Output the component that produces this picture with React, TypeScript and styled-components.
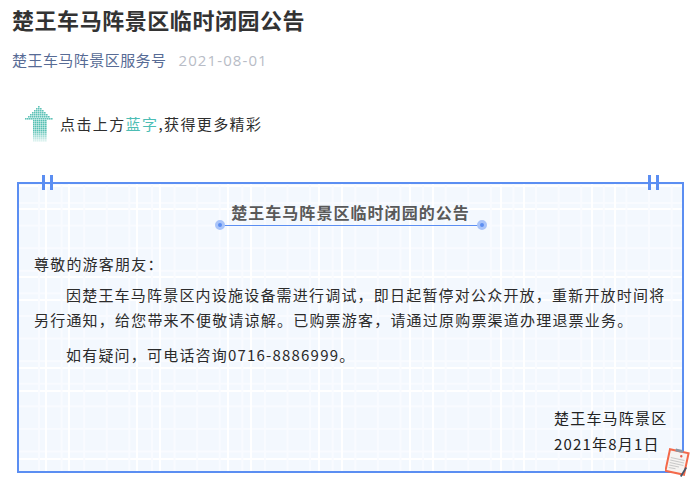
import React from "react";
import styled, { createGlobalStyle } from "styled-components";

const Global = createGlobalStyle`
  html, body { margin: 0; padding: 0; background: #fff; overflow: hidden; }
  body { font-family: "Open Sans", "Noto Sans CJK SC", sans-serif; }
`;

const Page = styled.main`
  width: 696px;
  height: 493px;
  box-sizing: border-box;
  padding: 2px 13px 0 12px;
  overflow: hidden;
`;

const Title = styled.h1`
  margin: 0;
  font: 700 22px/34px "Noto Sans CJK SC", sans-serif;
  color: #333;
  letter-spacing: 0.55px;
`;

const Meta = styled.div`
  display: flex;
  gap: 12px;
  margin-top: 14px;
  font-size: 15px;
  line-height: 20px;
  letter-spacing: 0.45px;
`;

const Account = styled.span`
  color: #576b95;
  font-family: "Noto Sans CJK SC", sans-serif;
`;

const DateText = styled.span`
  color: #b8bcc6;
  letter-spacing: 1.1px;
`;

const Promo = styled.div`
  display: flex;
  align-items: center;
  gap: 7px;
  margin: 35px 0 0 13px;
  height: 38px;
  font: 400 15px/24px "Noto Sans CJK SC", sans-serif;
  letter-spacing: 1.4px;
  color: #2e2e2e;
`;

const Highlight = styled.span`
  color: #4dbdb4;
`;

const Card = styled.section`
  position: relative;
  box-sizing: border-box;
  width: 667px;
  height: 291px;
  margin: 39px 0 0 5px;
  padding: 16px 15px 0 15px;
  border: 2px solid #5b8ef2;
  background-color: #f3f8fe;
  background-image:
    linear-gradient(90deg, #fff 0 2px, transparent 2px 68px, #fff 68px 70px, transparent 70px),
    linear-gradient(90deg, #f9fbff 0 1.5px, transparent 1.5px),
    linear-gradient(180deg, #fff 0 2px, transparent 2px 68px, #fff 68px 70px, transparent 70px),
    linear-gradient(180deg, #f9fbff 0 1.5px, transparent 1.5px);
  background-size: 91px 100%, 22.6px 100%, 100% 91px, 100% 22.6px;
  background-position: 49px 0, 19px 0, 0 24px, 0 18px;
`;

const Clip = styled.span<{ $side: "left" | "right" }>`
  position: absolute;
  top: -9px;
  ${(p) => (p.$side === "left" ? "left: 23px;" : "right: 23px;")}
  width: 11px;
  height: 15px;
  background: linear-gradient(90deg, #5b8ef2 0 3px, transparent 3px 8px, #5b8ef2 8px 11px);
`;

const HeadingWrap = styled.div`
  display: flex;
  justify-content: center;
`;

const Heading = styled.h2`
  position: relative;
  box-sizing: border-box;
  width: 262px;
  margin: 0;
  padding-bottom: 1px;
  border-bottom: 1px solid #5b8ef2;
  text-align: center;
  font: 700 16px/24px "Noto Sans CJK SC", sans-serif;
  letter-spacing: 1.05px;
  color: #595959;
`;

const Dot = styled.span<{ $side: "left" | "right" }>`
  position: absolute;
  bottom: -5px;
  ${(p) => p.$side}: -5px;
  width: 4px;
  height: 4px;
  border: 3px solid #a9c4f9;
  border-radius: 50%;
  background: #5b8ef2;
`;

const Body = styled.div`
  margin-top: 25px;
  font: 400 15px/25px "Noto Sans CJK SC", sans-serif;
  letter-spacing: 1.2px;
  color: #2b2b2b;
`;

const Para = styled.p<{ $indent?: boolean; $gap?: number }>`
  margin: ${(p) => p.$gap ?? 0}px 0 0;
  text-indent: ${(p) => (p.$indent ? "32px" : "0")};
`;

const Signature = styled.div`
  margin: 38px 0 0 auto;
  width: 113px;
  line-height: 26px;
  white-space: nowrap;
  color: #222;
`;

const Note = styled.svg`
  position: absolute;
  right: -11px;
  bottom: -9px;
  width: 28px;
  height: 32px;
`;

const ArrowIcon = () => {
  const cells: React.ReactElement[] = [];
  const widths = [2, 6, 10, 14, 18, 22, 28];
  widths.forEach((w, i) => {
    for (let x = 0; x < w; x += 2) {
      cells.push(<rect key={`h${i}-${x}`} x={14 - w / 2 + x} y={i * 2} width={1.6} height={1.6} fill="#45b9ab" opacity={0.85} />);
    }
  });
  for (let y = 14; y < 36; y += 2) {
    for (let x = 8; x < 21; x += 2) {
      const o = y < 24 ? 0.9 : Math.max(0.15, 0.9 - (y - 24) * 0.07);
      cells.push(<rect key={`b${y}-${x}`} x={x} y={y} width={1.6} height={1.6} fill="#45b9ab" opacity={o} />);
    }
  }
  return (
    <svg width="28" height="36" viewBox="0 0 28 36" aria-hidden="true">
      {cells}
    </svg>
  );
};

export default function App() {
  return (
    <Page>
      <Global />
      <Title>楚王车马阵景区临时闭园公告</Title>
      <Meta>
        <Account>楚王车马阵景区服务号</Account>
        <DateText>2021-08-01</DateText>
      </Meta>
      <Promo>
        <ArrowIcon />
        <span>
          点击上方<Highlight>蓝字</Highlight>,获得更多精彩
        </span>
      </Promo>
      <Card>
        <Clip $side="left" />
        <Clip $side="right" />
        <HeadingWrap>
          <Heading>
            楚王车马阵景区临时闭园的公告
            <Dot $side="left" />
            <Dot $side="right" />
          </Heading>
        </HeadingWrap>
        <Body>
          <Para>尊敬的游客朋友：</Para>
          <Para $indent $gap={6}>
            因楚王车马阵景区内设施设备需进行调试，即日起暂停对公众开放，重新开放时间将另行通知，给您带来不便敬请谅解。已购票游客，请通过原购票渠道办理退票业务。
          </Para>
          <Para $indent $gap={10}>
            如有疑问，可电话咨询0716-8886999。
          </Para>
          <Signature>
            楚王车马阵景区
            <br />
            2021年8月1日
          </Signature>
        </Body>
        <Note viewBox="0 0 28 32" aria-hidden="true">
          <g transform="rotate(12 12 14)">
            <rect x="2.5" y="3" width="19" height="22" fill="#f5f3f1" stroke="#f4694a" strokeWidth="2" />
            <rect x="8" y="1" width="8" height="3" rx="1" fill="#8a96a3" />
            <circle cx="15" cy="7.5" r="1.2" fill="#e65a4c" />
            <path d="M5 11h14M5 13.5h14M5 16h14M5 18.5h10M5 21h7" stroke="#c9c9c9" strokeWidth="1" />
          </g>
          <path d="M15 28l5.5-9 1.5 1-5.5 9z" fill="#46576a" />
        </Note>
      </Card>
    </Page>
  );
}
